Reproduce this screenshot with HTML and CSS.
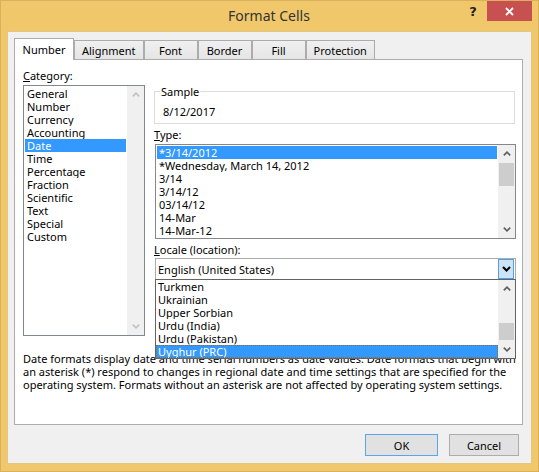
FILE: index.html
```html
<!DOCTYPE html>
<html lang="en">
<head>
    <meta charset="UTF-8">
    <title>Format Cells</title>
    <link rel="stylesheet" href="styles.css">
</head>
<body>
    <div class="window">
        <div class="titlebar">
            <div class="title">Format Cells</div>
            <div class="help">?</div>
            <div class="close">
                <svg width="9" height="9" viewBox="0 0 9 9"><path d="M1 1 L8 8 M8 1 L1 8" stroke="#fff" stroke-width="1.8"/></svg>
            </div>
        </div>
        <div class="client">
            <div class="tabs">
                <div class="tab active">Number</div>
                <div class="tab">Alignment</div>
                <div class="tab">Font</div>
                <div class="tab">Border</div>
                <div class="tab">Fill</div>
                <div class="tab">Protection</div>
            </div>
            <div class="panel">
                <div class="columns">
                    <div class="col">
                        <div class="label"><u>C</u>ategory:</div>
                        <div class="listbox category">
                            <div class="items">
                                <div class="item">General</div>
                                <div class="item">Number</div>
                                <div class="item">Currency</div>
                                <div class="item">Accounting</div>
                                <div class="item selected">Date</div>
                                <div class="item">Time</div>
                                <div class="item">Percentage</div>
                                <div class="item">Fraction</div>
                                <div class="item">Scientific</div>
                                <div class="item">Text</div>
                                <div class="item">Special</div>
                                <div class="item">Custom</div>
                            </div>
                            <div class="scrollbar disabled">
                                <div class="sb-btn"><svg width="8" height="5" viewBox="0 0 8 5"><path d="M0.8 4.4 L4 1.2 L7.2 4.4" /></svg></div>
                                <div class="sb-track"></div>
                                <div class="sb-btn"><svg width="8" height="5" viewBox="0 0 8 5"><path d="M0.8 0.6 L4 3.8 L7.2 0.6" /></svg></div>
                            </div>
                        </div>
                    </div>
                    <div class="col">
                        <fieldset class="sample">
                            <legend>Sample</legend>
                            <div class="sample-value">8/12/2017</div>
                        </fieldset>
                        <div class="label type-label"><u>T</u>ype:</div>
                        <div class="listbox type">
                            <div class="items">
                                <div class="item selected">*3/14/2012</div>
                                <div class="item">*Wednesday, March 14, 2012</div>
                                <div class="item">3/14</div>
                                <div class="item">3/14/12</div>
                                <div class="item">03/14/12</div>
                                <div class="item">14-Mar</div>
                                <div class="item">14-Mar-12</div>
                            </div>
                            <div class="scrollbar">
                                <div class="sb-btn"><svg width="8" height="5" viewBox="0 0 8 5"><path d="M0.8 4.4 L4 1.2 L7.2 4.4" /></svg></div>
                                <div class="sb-track"><div class="sb-thumb" style="margin-top: 1px; height: 23px;"></div></div>
                                <div class="sb-btn"><svg width="8" height="5" viewBox="0 0 8 5"><path d="M0.8 0.6 L4 3.8 L7.2 0.6" /></svg></div>
                            </div>
                        </div>
                        <div class="label locale-label"><u>L</u>ocale (location):</div>
                        <div class="combo">
                            <div class="combo-value">English (United States)</div>
                            <div class="combo-button">
                                <svg width="9" height="6" viewBox="0 0 9 6"><path d="M1 1 L4.5 4.5 L8 1" fill="none" stroke="#000" stroke-width="2"/></svg>
                            </div>
                            <div class="dropdown">
                                <div class="items">
                                    <div class="item">Turkmen</div>
                                    <div class="item">Ukrainian</div>
                                    <div class="item">Upper Sorbian</div>
                                    <div class="item">Urdu (India)</div>
                                    <div class="item">Urdu (Pakistan)</div>
                                    <div class="item selected focused">Uyghur (PRC)</div>
                                </div>
                                <div class="scrollbar">
                                    <div class="sb-btn"><svg width="8" height="5" viewBox="0 0 8 5"><path d="M0.8 4.4 L4 1.2 L7.2 4.4" /></svg></div>
                                    <div class="sb-track"><div class="sb-thumb" style="margin-top: 26px; height: 17px;"></div></div>
                                    <div class="sb-btn"><svg width="8" height="5" viewBox="0 0 8 5"><path d="M0.8 0.6 L4 3.8 L7.2 0.6" /></svg></div>
                                </div>
                            </div>
                        </div>
                    </div>
                </div>
                <p class="description">Date formats display date and time serial numbers as date values.  Date formats that begin with an asterisk (*) respond to changes in regional date and time settings that are specified for the operating system. Formats without an asterisk are not affected by operating system settings.</p>
            </div>
            <div class="buttons">
                <button class="ok">OK</button>
                <button class="cancel">Cancel</button>
            </div>
        </div>
    </div>
</body>
</html>
```

FILE: styles.css
```css
body {
    margin: 0;
    font-family: "Noto Sans", "Open Sans", sans-serif;
    font-size: 11px;
    color: #000;
}
.window {
    width: 539px;
    height: 472px;
    box-sizing: border-box;
    border: 1px solid #dcb05a;
    background-color: #f0c86b;
    display: flex;
    flex-direction: column;
}
.titlebar {
    height: 30px;
    flex: none;
    display: flex;
    align-items: flex-start;
    padding: 0 6px 0 78px;
}
.title {
    flex: 1;
    text-align: center;
    line-height: 30px;
    font-size: 14px;
    color: #333;
}
.help {
    width: 28px;
    text-align: center;
    font-family: "DejaVu Sans", sans-serif;
    font-weight: bold;
    font-size: 13px;
    line-height: 21px;
    color: #222;
}
.close {
    width: 45px;
    height: 20px;
    background-color: #c75050;
    display: flex;
    justify-content: center;
    align-items: center;
}
.client {
    flex: 1;
    margin: 0 6px 7px;
    border: 1px solid #e2c684;
    background-color: #f0f0f0;
    padding: 6px 8px 0 6px;
    display: flex;
    flex-direction: column;
}
.tabs {
    display: flex;
    align-items: flex-end;
    height: 22px;
    margin-bottom: -1px;
    position: relative;
    z-index: 1;
}
.tab {
    height: 20px;
    min-width: 54px;
    box-sizing: border-box;
    padding: 0 7px;
    border: 1px solid #acacac;
    background: linear-gradient(#f0f0f0, #e5e5e5);
    display: flex;
    justify-content: center;
    align-items: center;
}
.tab.active {
    height: 22px;
    min-width: 60px;
    padding: 0 6px 1px;
    border-bottom: none;
    background: #fff;
}
.panel {
    height: 366px;
    box-sizing: border-box;
    border: 1px solid #adadad;
    background-color: #fff;
    padding: 9px 6px 0 8px;
}
.columns {
    display: grid;
    grid-template-columns: 122px 362px;
    column-gap: 9px;
    align-items: start;
}
.label {
    line-height: 13px;
    margin-bottom: 3px;
}
.listbox {
    border: 1px solid #828790;
    box-sizing: border-box;
    display: flex;
}
.category {
    height: 251px;
}
.type {
    height: 95px;
    margin-left: 1px;
}
.items {
    flex: 1;
    padding: 1px;
    min-width: 0;
}
.item {
    height: 13px;
    line-height: 13px;
    padding-left: 2px;
    white-space: nowrap;
    overflow: hidden;
}
.item.selected {
    background-color: #3399ff;
    color: #fff;
}
.item.focused {
    box-sizing: border-box;
    outline: 1px dotted #8a6d3b;
    outline-offset: -1px;
}
.scrollbar {
    width: 17px;
    flex: none;
    background-color: #f0f0f0;
    display: flex;
    flex-direction: column;
}
.sb-btn {
    height: 17px;
    display: flex;
    justify-content: center;
    align-items: center;
}
.sb-btn path {
    fill: none;
    stroke: #606060;
    stroke-width: 1.7;
}
.disabled .sb-btn path {
    stroke: #c3c3c3;
}
.sb-track {
    flex: 1;
}
.sb-thumb {
    margin: 0 1px;
    background-color: #cdcdcd;
}
.sample {
    margin: 16px 1px 0 0;
    padding: 0 6px;
    min-width: 0;
    border: 1px solid #dcdcdc;
}
.sample legend {
    padding: 0 1px;
    margin-left: -1px;
    line-height: 13px;
}
.sample-value {
    line-height: 13px;
    padding: 7px 0 5px 2px;
}
.type-label {
    margin-top: 4px;
}
.locale-label {
    margin-top: 4px;
    margin-bottom: 2px;
}
.combo {
    position: relative;
    height: 21px;
    margin-left: 1px;
    box-sizing: border-box;
    border: 1px solid #acacac;
    border-bottom: none;
    padding-left: 2px;
    display: flex;
    align-items: center;
}
.combo-value {
    flex: 1;
    line-height: 13px;
}
.combo-button {
    width: 16px;
    align-self: stretch;
    box-sizing: border-box;
    margin-right: 1px;
    border: 1px solid #569de5;
    background-color: #cce4f7;
    display: flex;
    justify-content: center;
    align-items: center;
}
.dropdown {
    position: absolute;
    top: 100%;
    left: -1px;
    right: -1px;
    height: 80px;
    box-sizing: border-box;
    border: 1px solid #646464;
    background-color: #fff;
    display: flex;
}
.dropdown .items {
    padding: 0;
}
.description {
    margin: 16px 0 0;
    line-height: 13px;
}
.buttons {
    display: flex;
    justify-content: flex-end;
    gap: 11px;
    margin-top: 9px;
    padding-right: 4px;
}
button {
    width: 73px;
    height: 22px;
    padding: 0;
    font-family: inherit;
    font-size: 11px;
    color: #000;
    border: 1px solid #adadad;
    background-color: #e1e1e1;
}
button.ok {
    border-color: #5aa5ec;
}
button.cancel {
    width: 70px;
}
```
